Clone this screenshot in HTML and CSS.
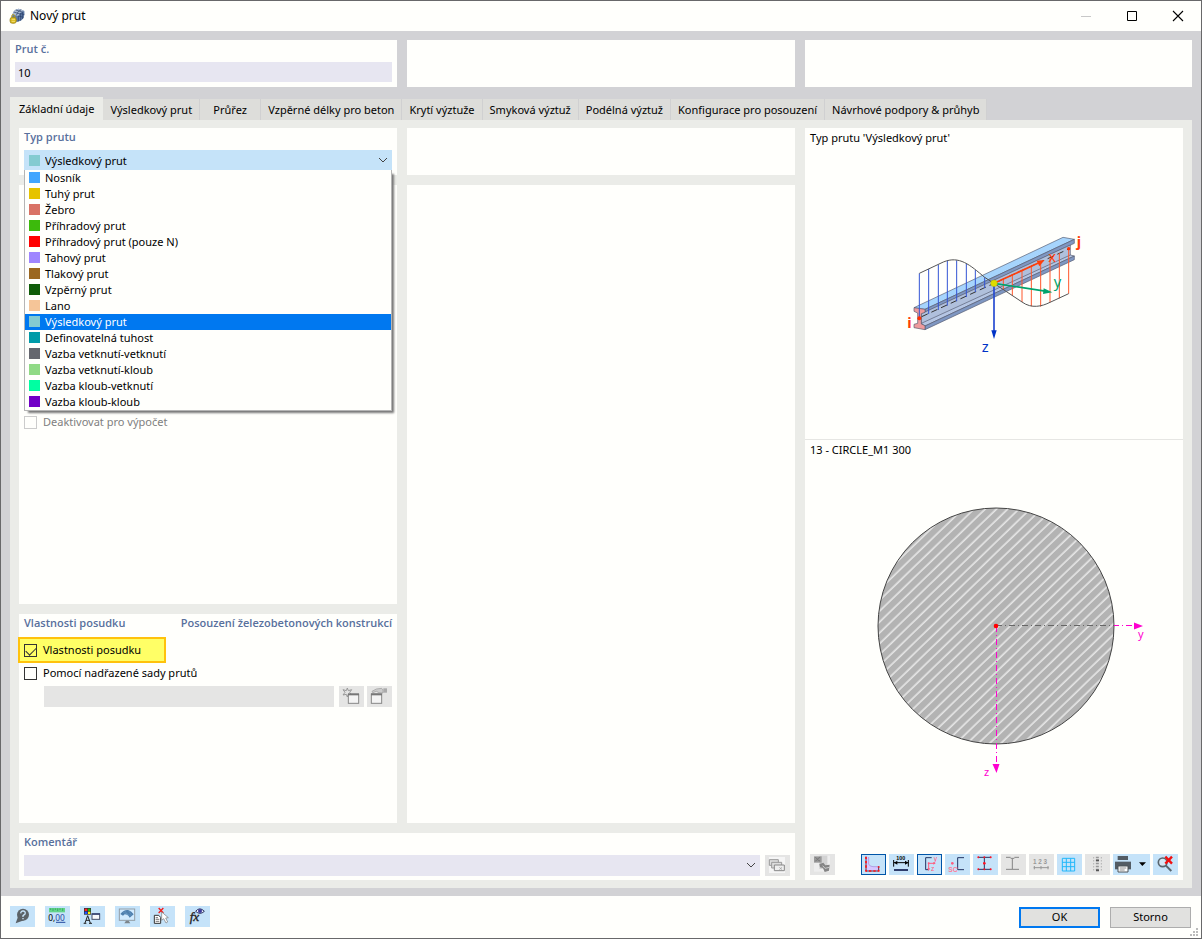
FILE: index.html
```html
<!DOCTYPE html>
<html lang="cs">
<head>
<meta charset="utf-8">
<title>Nový prut</title>
<link rel="stylesheet" href="styles.css">
</head>
<body>
<div class="window">
  <header class="titlebar">
    <svg class="app-icon" viewBox="0 0 48 48" aria-hidden="true">
      <path d="M10 20 Q14 4 29 2 L46 9 Q48 18 44 28 Q42 36 35 38 L24 42 L8 34Z" fill="#5f7ba6"/>
      <path d="M10 20 Q14 4 29 2 L46 9 Q34 10 28 24Z" fill="#a9bad2"/>
      <path d="M14 12 L34 18 M20 6 L40 12 M28 24 L44 28 M34 16 L46 20 M22 22 Q26 8 37 5 M28 24 L28 40 M35 16 L35 38 M41 11 L41 33" stroke="#263d66" stroke-width="2" fill="none"/>
      <rect x="3" y="28" width="19" height="18" rx="7" fill="#d9b91c" stroke="#8f7a13" stroke-width="2"/>
      <path d="M8 29 Q7 19 13 19 Q18 19 18 29" fill="none" stroke="#b39a1a" stroke-width="3"/>
      <path d="M8 34 H18 M8 40 H18" stroke="#fff3a0" stroke-width="2"/>
    </svg>
    <h1 class="window-title">Nový prut</h1>
    <div class="window-controls">
      <button class="window-button" aria-label="Minimalizovat" disabled><svg viewBox="0 0 12 12"><path d="M1 6.5H11" stroke="#c8c8c8"/></svg></button>
      <button class="window-button" aria-label="Maximalizovat"><svg viewBox="0 0 12 12"><path d="M1.500 1.500H10.500V10.500H1.500Z" fill="none" stroke="#000"/></svg></button>
      <button class="window-button" aria-label="Zavřít"><svg viewBox="0 0 12 12"><path d="M1 1L11 11M11 1L1 11" stroke="#000" stroke-width="1.100"/></svg></button>
    </div>
  </header>

  <main class="content">
    <div class="summary">
      <section class="panel">
        <label class="panel-title" for="member-no">Prut č.</label>
        <input class="field" id="member-no" type="text" value="10">
      </section>
      <section class="panel"></section>
      <section class="panel"></section>
    </div>

    <div class="tabs" role="tablist">
      <button class="tab tab-active" role="tab" aria-selected="true">Základní údaje</button>
      <button class="tab" role="tab">Výsledkový prut</button>
      <button class="tab" role="tab">Průřez</button>
      <button class="tab" role="tab">Vzpěrné délky pro beton</button>
      <button class="tab" role="tab">Krytí výztuže</button>
      <button class="tab" role="tab">Smyková výztuž</button>
      <button class="tab" role="tab">Podélná výztuž</button>
      <button class="tab" role="tab">Konfigurace pro posouzení</button>
      <button class="tab" role="tab">Návrhové podpory &amp; průhyb</button>
    </div>

    <div class="page" role="tabpanel">
      <section class="panel type-panel">
        <label class="panel-title" for="member-type">Typ prutu</label>
        <div class="combo">
          <span class="swatch sw-result combo-swatch"></span>
          <select class="field combo-select" id="member-type">
            <option>Výsledkový prut</option>
          </select>
          <svg class="chevron" viewBox="0 0 10 6"><path d="M1 1L5 5L9 1" fill="none" stroke="#444"/></svg>
          <ul class="options" role="listbox" aria-label="Typ prutu">
            <li class="option" role="option"><span class="swatch sw-beam"></span>Nosník</li>
            <li class="option" role="option"><span class="swatch sw-rigid"></span>Tuhý prut</li>
            <li class="option" role="option"><span class="swatch sw-rib"></span>Žebro</li>
            <li class="option" role="option"><span class="swatch sw-truss"></span>Příhradový prut</li>
            <li class="option" role="option"><span class="swatch sw-truss-n"></span>Příhradový prut (pouze N)</li>
            <li class="option" role="option"><span class="swatch sw-tension"></span>Tahový prut</li>
            <li class="option" role="option"><span class="swatch sw-compression"></span>Tlakový prut</li>
            <li class="option" role="option"><span class="swatch sw-buckling"></span>Vzpěrný prut</li>
            <li class="option" role="option"><span class="swatch sw-cable"></span>Lano</li>
            <li class="option option-selected" role="option" aria-selected="true"><span class="swatch sw-result"></span>Výsledkový prut</li>
            <li class="option" role="option"><span class="swatch sw-stiffness"></span>Definovatelná tuhost</li>
            <li class="option" role="option"><span class="swatch sw-ff"></span>Vazba vetknutí-vetknutí</li>
            <li class="option" role="option"><span class="swatch sw-fh"></span>Vazba vetknutí-kloub</li>
            <li class="option" role="option"><span class="swatch sw-hf"></span>Vazba kloub-vetknutí</li>
            <li class="option" role="option"><span class="swatch sw-hh"></span>Vazba kloub-kloub</li>
          </ul>
        </div>
      </section>

      <section class="panel options-panel">
        <label class="check check-disabled"><input class="box" type="checkbox" disabled>Deaktivovat pro výpočet</label>
      </section>

      <section class="panel design-panel">
        <div class="panel-head">
          <h2 class="panel-title">Vlastnosti posudku</h2>
          <h2 class="panel-title">Posouzení železobetonových konstrukcí</h2>
        </div>
        <label class="check check-marked"><input class="box" type="checkbox" checked>Vlastnosti posudku</label>
        <label class="check"><input class="box" type="checkbox">Pomocí nadřazené sady prutů</label>
        <div class="set-row">
          <input class="field field-disabled" type="text" aria-label="Sada prutů" disabled>
          <button class="tool tool-off" aria-label="Nová sada" disabled><svg viewBox="0 0 75 63">
            <path d="M25 6L28 14L38 11L32 19L38 27L28 25L25 33L22 25L12 27L18 19L12 11L22 14Z" fill="none" stroke="#999" stroke-width="3"/>
            <rect x="28" y="25" width="31" height="27" fill="#f4f4f4" stroke="#888" stroke-width="3"/><path d="M27 25H60" stroke="#777" stroke-width="6"/></svg></button>
          <button class="tool tool-off" aria-label="Upravit sadu" disabled><svg viewBox="0 0 75 63">
            <rect x="13" y="24" width="31" height="28" fill="#f4f4f4" stroke="#888" stroke-width="3"/><path d="M12 25H45" stroke="#777" stroke-width="6"/>
            <path d="M15 16L28 9L44 7L48 12V21L36 20L28 16L17 20Z" fill="#ccc" stroke="#999" stroke-width="2"/><path d="M49 7H60V20H49Z" fill="#aaa"/></svg></button>
        </div>
      </section>

      <section class="panel middle-top"></section>
      <section class="panel middle-main"></section>

      <section class="panel comment-panel">
        <label class="panel-title" for="comment">Komentář</label>
        <div class="comment-row">
          <div class="combo">
            <select class="field comment-select" id="comment"><option></option></select>
            <svg class="chevron" viewBox="0 0 10 6"><path d="M1 1L5 5L9 1" fill="none" stroke="#444"/></svg>
          </div>
          <button class="tool tool-off" aria-label="Komentáře" disabled><svg viewBox="0 0 75 63">
            <rect x="12" y="6" width="48" height="48" fill="#f5f5f5"/>
            <path d="M13 14H40V31H13Z" fill="#ddd" stroke="#999" stroke-width="3"/><path d="M20 22H50V39H20Z" fill="#ddd" stroke="#999" stroke-width="3"/><path d="M28 30H58V47H28Z" fill="#eee" stroke="#888" stroke-width="3"/><path d="M43 37L51 44M51 37L43 44" stroke="#999" stroke-width="2"/></svg></button>
        </div>
      </section>

      <aside class="panel preview">
        <section class="preview-type">
          <h2 class="preview-title">Typ prutu 'Výsledkový prut'</h2>
          <svg class="beam" viewBox="0 0 630 450" role="img" aria-label="Výsledkový prut">
            <g stroke="#555a70" stroke-width="2" stroke-linejoin="round">
              <path d="M72 263L519 52L553 58L105 268Z" fill="#a6d4fc"/>
              <path d="M105 268L553 58V70L105 277Z" fill="#7f97c2"/>
              <path d="M94 281L541 75V111L94 314Z" fill="#b0c0dc"/>
              <path d="M94 310L541 105L553 108L105 318Z" fill="#b5c6e4"/>
              <path d="M105 318L553 108V119L105 329Z" fill="#7f97c2"/>
              <path d="M72 263L105 268V277L94 281V312L105 317V329L72 323V313L83 310V279L72 274Z" fill="#ef9a9c"/>
            </g>
            <path d="M95 290L536 87" stroke="#333" stroke-width="3" stroke-dasharray="20 12" fill="none"/>
            <path d="M88 160V295M116 147V282M145 134V270M172 122V257M200 121V244M229 131V231M256 150V216M284 172V204" stroke="#3355d4" stroke-width="3"/>
            <path d="M340 176V208M367 163V227M396 151V246M424 138V259M452 126V260M480 113V247M508 99V235M536 86V221" stroke="#ff562a" stroke-width="3"/>
            <path d="M88 160L160 126C208 106 240 135 284 172L312 190L396 246C425 267 456 259 480 247L536 221" fill="none" stroke="#555" stroke-width="3"/>
            <path d="M312 190L450 127" stroke="#ff3e0a" stroke-width="5"/><path d="M464 120L440 122L448 139Z" fill="#ff3e0a"/>
            <path d="M312 190L470 214" stroke="#00a36d" stroke-width="5"/><path d="M487 217L461 205L459 222Z" fill="#00a36d"/>
            <path d="M312 190V340" stroke="#2549d0" stroke-width="5"/><path d="M312 357L304 331H320Z" fill="#0033c7"/>
            <circle cx="312" cy="190" r="10" fill="#dfdc00" stroke="#a19f00"/>
            <circle cx="88" cy="295" r="6" fill="#ff3000"/><circle cx="536" cy="86" r="5" fill="#ff3000"/>
            <text x="52" y="324" class="label-node">i</text><text x="560" y="80" class="label-node">j</text>
            <text x="475" y="126" class="label-axis label-x">x</text><text x="491" y="201" class="label-axis label-y">y</text><text x="275" y="395" class="label-axis label-z">z</text>
          </svg>
        </section>
        <section class="preview-section">
          <h2 class="preview-title">13 - CIRCLE_M1 300</h2>
          <svg class="section-shape" viewBox="836 500 316 290" role="img" aria-label="CIRCLE_M1 300">
            <defs><pattern id="hatch" width="7.800" height="7.800" patternUnits="userSpaceOnUse" patternTransform="rotate(-44 996 626)"><rect width="9" height="9" fill="#b3b3b3"/><path d="M0 4H9" stroke="#fff" stroke-width="1.100"/></pattern></defs>
            <circle cx="996" cy="626" r="118" fill="url(#hatch)" stroke="#444"/>
            <path d="M996 625.500H1136" stroke="#ff00d0" stroke-dasharray="6 3 1 3"/>
            <path d="M996 625.500H1114" stroke="#666" stroke-dasharray="6 3 1 3"/>
            <path d="M996.500 626V765" stroke="#ff00d0" stroke-dasharray="6 3 1 3"/>
            <path d="M1134 622.500L1143 626L1134 629.500ZM992.500 764H999.500L996.500 773Z" fill="#ff00d0"/>
            <circle cx="996" cy="626" r="2.300" fill="#f00"/>
            <text x="1138" y="638" class="label-section">y</text><text x="984" y="776" class="label-section">z</text>
          </svg>
        </section>
        <div class="toolbar">
          <button class="tool tool-off" aria-label="Výpočet" disabled><svg viewBox="0 0 75 63">
            <rect x="12" y="5" width="48" height="48" fill="#eee"/><rect x="28" y="5" width="24" height="40" fill="#d3d3d3"/><rect x="12" y="7" width="23" height="19" fill="#999"/><path d="M16 10L22 15L30 10M16 21L22 17L30 21" stroke="#666" stroke-width="2" fill="none"/><path d="M28 30L40 26L46 34L59 32L57 50L44 54L39 42L30 40Z" fill="#858585"/><path d="M38 35L45 43L58 40" stroke="#ccc" stroke-width="3" fill="none"/></svg></button>
          <button class="tool tool-on tool-first" aria-label="Obrys"><svg viewBox="0 0 75 63">
            <path d="M15 9H24V30Q26 38 36 38H52V51H15Z" fill="#d6c6ff"/><path d="M23 9V30Q26 38 36 38H51" fill="none" stroke="#a583d6" stroke-width="2"/><path d="M15 8V51H53V37" fill="none" stroke="#563358" stroke-width="3"/><path d="M15 8V51H53V37" fill="none" stroke="#ff1414" stroke-width="5" stroke-dasharray="7 6"/></svg></button>
          <button class="tool" aria-label="Kóty"><svg viewBox="0 0 75 63">
            <text x="22" y="19" class="icon-text icon-bold">100</text><path d="M14 18V38M58 18V38M15 26H58" stroke="#000" stroke-width="3"/><path d="M15 26L25 20V32ZM58 26L48 20V32Z"/><path d="M15 48H57" stroke="#2d3c6b" stroke-width="6"/></svg></button>
          <button class="tool tool-on" aria-label="Hlavní osy"><svg viewBox="0 0 75 63">
            <path d="M44 11H26V47H36" fill="none" stroke="#223463" stroke-width="3"/><path d="M33 28H54M35 28V48" stroke="#ff5c7d" stroke-width="3"/><path d="M56 28L49 24V32ZM35 51L31 43H39Z" fill="#ff5c7d"/><circle cx="35" cy="28" r="3" fill="#ff5c7d"/><text x="50" y="20" class="icon-text icon-pink">y</text><text x="42" y="52" class="icon-text icon-pink">z</text></svg></button>
          <button class="tool" aria-label="Střed smyku"><svg viewBox="0 0 75 63">
            <path d="M57 11H38V47H57" fill="none" stroke="#223463" stroke-width="3"/><circle cx="22" cy="28" r="4" fill="#ff5c7d"/><text x="10" y="53" class="icon-text icon-sc">SC</text></svg></button>
          <button class="tool" aria-label="Body napětí"><svg viewBox="0 0 75 63">
            <path d="M15 10H54M15 46H54M34 10V46" stroke="#26335f" stroke-width="3"/><g fill="#f12"><circle cx="16" cy="10" r="3"/><circle cx="34" cy="10" r="3"/><circle cx="53" cy="10" r="3"/><circle cx="34" cy="28" r="4"/><circle cx="16" cy="46" r="3"/><circle cx="34" cy="46" r="3"/><circle cx="53" cy="46" r="3"/></g></svg></button>
          <button class="tool tool-off" aria-label="Průřez" disabled><svg viewBox="0 0 75 63"><path d="M15 10H29M40 10H54M15 46H54M29 13H40M34 13V45" stroke="#858585" stroke-width="3"/></svg></button>
          <button class="tool tool-off" aria-label="Číslování" disabled><svg viewBox="0 0 75 63"><text x="12" y="30" class="icon-text icon-gray">1 2 3</text><path d="M14 41H59M16 36V46M36 36V46M57 36V46" stroke="#969696" stroke-width="3"/></svg></button>
          <button class="tool" aria-label="Rastr"><svg viewBox="0 0 75 63"><path d="M16 13H53V51H16ZM28 13V51M41 13V51M16 25H53M16 38H53" stroke="#22b7fa" stroke-width="3" fill="none"/></svg></button>
          <button class="tool tool-off" aria-label="Tabulka" disabled><svg viewBox="0 0 75 63"><path d="M37 8V53" stroke="#999" stroke-width="9" stroke-dasharray="5 4"/><path d="M26 10V53M49 10V53" stroke="#999" stroke-width="3" stroke-dasharray="3 6"/><path d="M33 19H42M33 49H42" stroke="#555" stroke-width="5"/></svg></button>
          <button class="tool tool-wide" aria-label="Tisk"><svg viewBox="0 0 111 63"><path d="M14 6H45V18H14Z" fill="#535c64"/><path d="M6 23H54V46H6Z" fill="#535c64"/><path d="M15 36H45V54H15Z" fill="#fff" stroke="#4c5256" stroke-width="3"/><path d="M20 42H40M20 48H35" stroke="#555" stroke-width="2"/><path d="M78 25H99L88 36Z"/></svg></button>
          <button class="tool" aria-label="Zrušit přiblížení"><svg viewBox="0 0 75 63"><circle cx="29" cy="25" r="13" fill="#d5e8f5" stroke="#59656d" stroke-width="5"/><path d="M38 34L55 51" stroke="#59656d" stroke-width="6"/><path d="M37 8L57 29M57 8L37 29" stroke="#f01010" stroke-width="7"/></svg></button>
        </div>
      </aside>
    </div>
  </main>

  <footer class="footer">
    <div class="footer-tools">
      <button class="tool" aria-label="Nápověda"><svg viewBox="0 0 75 63"><circle cx="39" cy="26" r="18" fill="#5b6267"/><path d="M24 32L17 52L42 43Z" fill="#5b6267"/><path d="M32 22Q33 14 40 15Q48 17 45 24L39 29V33M39 36V40" fill="none" stroke="#c6e3f8" stroke-width="4"/></svg></button>
      <button class="tool" aria-label="Jednotky a desetinná místa"><svg viewBox="0 0 75 63"><path d="M12 6H60V19H12Z" fill="#62d58a"/><path d="M17 7V12M24 7V15M31 7V12M38 7V15M45 7V12M53 7V15" stroke="#289653" stroke-width="2"/><text x="10" y="45" class="icon-number">0,<tspan fill="#254a9f">00</tspan></text><path d="M33 49H61" stroke="#254a9f" stroke-width="3"/></svg></button>
      <button class="tool" aria-label="Zobrazení"><svg viewBox="0 0 75 63"><rect x="12" y="6" width="21" height="20" fill="#333"/><path d="M14 8H22V15H14Z" fill="#f22"/><path d="M24 8H31V15H24Z" fill="#1b1"/><path d="M14 17H22V24H14Z" fill="#25f"/><path d="M24 17H31V24H24Z" fill="#fe0"/><path d="M15 51L23 29L31 51M18 43H28M11 52H19M27 52H36" fill="none" stroke="#222" stroke-width="3"/><rect x="36" y="24" width="23" height="16" fill="#f8f8fb" stroke="#444b68" stroke-width="3"/><path d="M35 24H60" stroke="#394574" stroke-width="5"/></svg></button>
      <button class="tool" aria-label="Pohled"><svg viewBox="0 0 75 63"><rect x="13" y="9" width="46" height="34" fill="#d0eaff" stroke="#929da5" stroke-width="3"/><path d="M33 44L28 52H46L41 44Z" fill="#7c858b"/><path d="M16 24Q27 10 40 12Q50 16 56 25L44 35Q38 25 29 25L24 29Z" fill="#4e7fae"/><path d="M23 18L47 29M29 14L39 28M40 13L50 28" stroke="#7fb2dd" stroke-width="1"/></svg></button>
      <button class="tool" aria-label="Zrušit výběr"><svg viewBox="0 0 75 63"><path d="M26 6L40 21M40 6L26 21" stroke="#f31919" stroke-width="4"/><path d="M13 28H26L32 34V52H13Z" fill="#fff" stroke="#333" stroke-width="3"/><path d="M17 35H24M17 40H28M17 46H28" stroke="#333" stroke-width="2"/><path d="M35 18V43L41 38L48 51L53 48L47 36L55 35Z" fill="#fff" stroke="#777" stroke-width="2"/></svg></button>
      <button class="tool" aria-label="Vzorec"><svg viewBox="0 0 75 63"><text x="14" y="45" class="icon-fx">fx</text><path d="M32 16Q44 1 58 16Q45 28 32 16Z" fill="#f1f5ff" stroke="#28305b" stroke-width="3"/><circle cx="45" cy="15" r="6" fill="#3b3b9c"/></svg></button>
    </div>
    <div class="footer-actions">
      <button class="action action-primary">OK</button>
      <button class="action">Storno</button>
    </div>
    <svg class="grip" viewBox="0 0 8 8" aria-hidden="true"><path d="M6 0H8V2H6ZM3 3H5V5H3ZM6 3H8V5H6ZM0 6H2V8H0ZM3 6H5V8H3ZM6 6H8V8H6Z" fill="#bbb"/></svg>
  </footer>
</div>
</body>
</html>
```

FILE: styles.css
```css
* {
  box-sizing: border-box;
}

body {
  margin: 0;
  font: 11px/16px "Noto Sans", "Open Sans", sans-serif;
  color: #000;
}

button,
input,
select {
  font: inherit;
  color: inherit;
  border: 0;
  border-radius: 0;
  margin: 0;
  padding: 0;
}

h1,
h2 {
  margin: 0;
  font: inherit;
}

svg {
  display: block;
}

.window {
  display: flex;
  flex-direction: column;
  min-height: 100vh;
  border: 1px solid #68686a;
  background: #fffffc;
}

/* Title bar */
.titlebar {
  display: flex;
  align-items: center;
  height: 30px;
  padding-left: 8px;
}

.app-icon {
  width: 16px;
  height: 16px;
}

.window-title {
  margin-left: 5px;
  font-size: 12px;
}

.window-controls {
  display: flex;
  margin-left: auto;
}

.window-button {
  display: grid;
  place-items: center;
  width: 46px;
  height: 28px;
  background: none;
}

.window-button svg {
  width: 12px;
  height: 12px;
}

/* Content */
.content {
  display: flex;
  flex-direction: column;
  flex: 1;
  padding: 9px 9px 8px;
  background: #d2d2d5;
}

.summary {
  display: grid;
  grid-template-columns: repeat(3, 1fr);
  gap: 10px;
}

.panel {
  min-width: 0;
  padding: 0 5px 5px;
  background: #fffffc;
}

.panel-title {
  display: block;
  margin-bottom: 4px;
  line-height: 18px;
  font-family: "Open Sans", "Noto Sans", sans-serif;
  font-weight: 600;
  color: #58709c;
}

.panel-head {
  display: flex;
  justify-content: space-between;
}

.field {
  display: block;
  width: 100%;
  height: 20px;
  padding: 1px 3px 0;
  background: #e7e6f1;
}

.tabs {
  display: flex;
  align-items: flex-end;
  height: 33px;
  padding-top: 10px;
}

.tab {
  height: 21px;
  min-width: 61px;
  padding: 0 7px;
  border-right: 1px solid #d0d0d1;
  background: #ddddda;
  white-space: nowrap;
}

.tab-active {
  height: 23px;
  padding: 0 9px;
  border-right: 0;
  background: #ebece8;
}

.page {
  display: grid;
  grid-template-columns: 378fr 388fr 378fr;
  grid-template-rows: 47px 1fr 209px auto;
  gap: 10px;
  flex: 1;
  padding: 8px 9px;
  background: #ebece8;
}

.middle-top {
  grid-area: 1 / 2;
}

.middle-main {
  grid-area: 2 / 2 / 4 / 3;
}

.comment-panel {
  grid-area: 4 / 1 / 5 / 3;
  padding-bottom: 4px;
}

/* Drop-downs */
.combo {
  position: relative;
  flex: 1;
}

.combo-select,
.comment-select {
  appearance: none;
}

.combo-select {
  padding-left: 21px;
  background: #c5e3f9;
}

.comment-select {
  height: 21px;
}

.combo-swatch {
  position: absolute;
  top: 5px;
  left: 5px;
}

.chevron {
  position: absolute;
  top: 7px;
  right: 4px;
  width: 10px;
  height: 6px;
  pointer-events: none;
}

.options {
  position: absolute;
  z-index: 1;
  top: 20px;
  left: 0;
  right: 0;
  margin: 0;
  padding: 0;
  list-style: none;
  border: 1px solid #b5b5b5;
  border-top: 0;
  background: #fffffc;
  box-shadow: 3px 3px 2px -1px #777;
}

.option {
  display: flex;
  align-items: center;
  gap: 5px;
  height: 16px;
  padding-left: 4px;
}

.option .swatch {
  margin-bottom: 1px;
}

.option-selected {
  color: #fff;
  background: #0078f0;
}

.swatch {
  width: 11px;
  height: 11px;
}

.sw-beam { background: #42a5ff; }
.sw-rigid { background: #e6c300; }
.sw-rib { background: #d97265; }
.sw-truss { background: #3cba0c; }
.sw-truss-n { background: #ff0000; }
.sw-tension { background: #9f86ff; }
.sw-compression { background: #9b6720; }
.sw-buckling { background: #0f5c08; }
.sw-cable { background: #f5c598; }
.sw-result { background: #84cbd1; }
.sw-stiffness { background: #009ba8; }
.sw-ff { background: #65676e; }
.sw-fh { background: #90da85; }
.sw-hf { background: #00ffa2; }
.sw-hh { background: #7100c6; }

/* Check boxes */
.options-panel {
  padding-top: 228px;
}

.check {
  display: flex;
  align-items: center;
  gap: 6px;
  width: fit-content;
  height: 18px;
}

.check-disabled {
  color: #808080;
}

.check-marked {
  height: 26px;
  margin: 1px 0 1px -6px;
  padding: 0 23px 0 4px;
  border: 2px solid #ffc20c;
  background: #ffff66;
}

.box {
  appearance: none;
  width: 13px;
  height: 13px;
  border: 1px solid #333;
}

.box:disabled {
  border-color: #ccc;
}

.box:checked::before {
  content: "";
  display: block;
  width: 9px;
  height: 5px;
  margin: 2px 0 0 1px;
  border: solid #333;
  border-width: 0 0 1px 1px;
  transform: rotate(-45deg);
}

.set-row {
  display: flex;
  gap: 3px;
  margin-top: 4px;
  padding-left: 20px;
}

.field-disabled {
  flex: 1;
  width: auto;
  height: 21px;
  margin-right: 2px;
  background: #e5e5e4;
}

.comment-row {
  display: flex;
  gap: 5px;
}

/* Icon buttons */
.tool {
  flex: none;
  width: 25px;
  height: 21px;
  background: #c5e3f9;
}

.tool svg {
  width: 25px;
  height: 21px;
}

.tool-off {
  background: #e5e5e4;
}

.tool-on {
  outline: 1px solid #0055a8;
  outline-offset: -1px;
}

.tool-wide,
.tool-wide svg {
  width: 37px;
}

.icon-text {
  font: 16px "Liberation Sans", sans-serif;
}

.icon-bold {
  font-weight: bold;
}

.icon-pink {
  font-size: 20px;
  fill: #ff5c7d;
}

.icon-sc {
  font-size: 20px;
  font-weight: bold;
  fill: #ff7c97;
}

.icon-gray {
  font-size: 19px;
  font-weight: bold;
  fill: #999;
}

.icon-number {
  font: 25px "Noto Sans", sans-serif;
}

.icon-fx {
  font: italic 40px "Liberation Serif", serif;
  fill: #222;
  stroke: #222;
}

/* Preview */
.preview {
  display: flex;
  flex-direction: column;
  grid-area: 1 / 3 / 5 / 4;
  padding: 0;
}

.preview-title {
  padding: 2px 5px;
}

.preview-type {
  height: 312px;
  padding-left: 2px;
  border-bottom: 1px solid #e6e6e3;
}

.preview-type .preview-title {
  padding-left: 3px;
}

.beam {
  width: 210px;
  height: 150px;
  margin: 72px auto 0;
}

.preview-section {
  flex: 1;
}

.section-shape {
  width: 316px;
  height: 290px;
  margin: 40px auto 0;
}

.toolbar {
  display: flex;
  gap: 3px;
  padding: 5px;
}

.tool-first {
  margin-left: auto;
}

.label-node {
  font: bold 44px "Noto Sans", sans-serif;
  fill: #ff3e0a;
}

.label-axis {
  font: 44px "Noto Sans", sans-serif;
}

.label-x { fill: #ff3e0a; }
.label-y { fill: #00a36d; }
.label-z { fill: #0033c7; }

.label-section {
  font: 11px "Noto Sans", sans-serif;
  fill: #ff00d0;
}

/* Footer */
.footer {
  position: relative;
  display: flex;
  align-items: center;
  justify-content: space-between;
  height: 42px;
  padding: 0 10px 0 9px;
}

.footer-tools,
.footer-actions {
  display: flex;
  gap: 10px;
}

.footer-tools {
  margin-bottom: 2px;
}

.action {
  width: 81px;
  height: 21px;
  border: 1px solid #adadad;
  background: #e1e1df;
}

.action-primary {
  border: 2px solid #0078f0;
}

.grip {
  position: absolute;
  right: 3px;
  bottom: 2px;
  width: 8px;
  height: 8px;
}
```
